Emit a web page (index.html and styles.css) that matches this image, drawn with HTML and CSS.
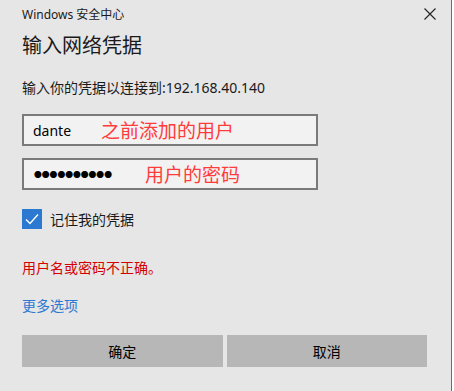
FILE: index.html
```html
<!DOCTYPE html>
<html lang="zh-CN">

<head>
    <meta charset="UTF-8">
    <title>Windows 安全中心</title>
    <link rel="stylesheet" href="styles.css">
</head>

<body>
    <div class="dialog">
        <div class="titlebar">
            <span class="app-name">Windows 安全中心</span>
            <svg class="close" width="12" height="12" viewBox="0 0 12 12">
                <path d="M0.5 0.5 L11.5 11.5 M11.5 0.5 L0.5 11.5" stroke="#222" stroke-width="1.1" fill="none" />
            </svg>
        </div>

        <h1>输入网络凭据</h1>
        <p class="hint">输入你的凭据以连接到:192.168.40.140</p>

        <div class="fields">
            <div class="field">
                <span class="value">dante</span>
                <span class="note note-user">之前添加的用户</span>
            </div>
            <div class="field">
                <span class="dots">●●●●●●●●●●</span>
                <span class="note note-pass">用户的密码</span>
            </div>
        </div>

        <label class="remember">
            <span class="checkbox">
                <svg width="20" height="20" viewBox="0 0 20 20">
                    <path d="M4 10.5 L8 14.5 L16 5.5" stroke="#fff" stroke-width="1.4" fill="none" />
                </svg>
            </span>
            记住我的凭据
        </label>

        <p class="error">用户名或密码不正确。</p>
        <a class="more" href="#">更多选项</a>

        <div class="actions">
            <button>确定</button>
            <button>取消</button>
        </div>
    </div>
</body>

</html>
```

FILE: styles.css
```css
body {
    margin: 0;
    background-color: #ffffff;
    font-family: "Noto Sans", "Noto Sans CJK SC", sans-serif;
    color: #000;
}

.dialog {
    width: 452px;
    height: 391px;
    box-sizing: border-box;
    padding: 0 24px 0 22px;
    background-color: #e6e6e6;
    border-right: 1px solid #2b79d0;
}

.titlebar {
    display: flex;
    justify-content: space-between;
    align-items: center;
    height: 28px;
    margin-right: -9px;
}

.app-name {
    font-size: 12px;
    color: #1a1a1a;
}

h1 {
    margin: 4px 0 0;
    font-size: 20px;
    font-weight: normal;
    line-height: 28px;
    color: #1a1a1a;
}

.hint {
    margin: 18px 0 0;
    font-size: 14px;
    line-height: 20px;
    color: #1a1a1a;
}

.fields {
    display: flex;
    flex-direction: column;
    gap: 12px;
    margin-top: 16px;
}

.field {
    display: flex;
    align-items: center;
    width: 296px;
    height: 32px;
    box-sizing: border-box;
    padding-left: 9px;
    background-color: #f2f2f2;
    border: 2px solid #7a7a7a;
}

.value {
    font-size: 14px;
}

.dots {
    font-family: "Noto Sans CJK SC", sans-serif;
    font-size: 7.8px;
    padding-left: 1px;
}

.note {
    font-size: 19px;
    color: #ff3c3c;
}

.note-user {
    margin-left: 30px;
}

.note-pass {
    margin-left: 33px;
}

.remember {
    display: flex;
    align-items: center;
    gap: 8px;
    margin-top: 19px;
    font-size: 14px;
    color: #1a1a1a;
}

.checkbox {
    width: 20px;
    height: 20px;
    background-color: #2b79d0;
}

.checkbox svg {
    display: block;
}

.error {
    margin: 29px 0 0;
    font-size: 14px;
    line-height: 20px;
    color: #d40000;
}

.more {
    display: block;
    margin-top: 18px;
    font-size: 14px;
    line-height: 20px;
    color: #2b79d0;
    text-decoration: none;
}

.actions {
    display: flex;
    gap: 4px;
    margin-top: 19px;
}

.actions button {
    flex: 1;
    height: 32px;
    border: none;
    background-color: #b7b7b7;
    font-family: inherit;
    font-size: 14px;
    color: #000;
}
```
